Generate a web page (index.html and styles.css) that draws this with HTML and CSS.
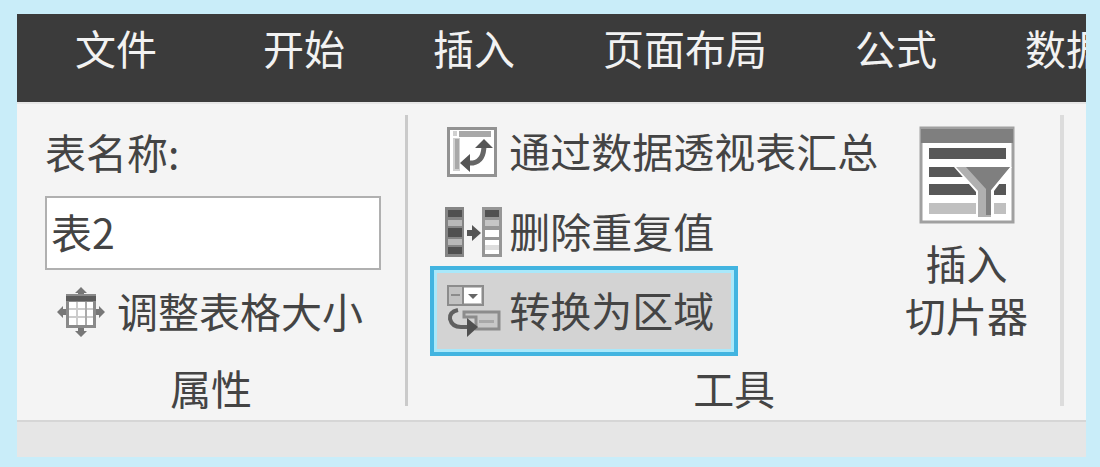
FILE: index.html
```html
<!DOCTYPE html>
<html lang="zh-CN">
<head>
<meta charset="utf-8">
<title>表格工具</title>
<link rel="stylesheet" href="styles.css">
</head>
<body>
<main class="window">
  <nav class="tabs">
    <button class="tab tab-file">文件</button>
    <button class="tab">开始</button>
    <button class="tab">插入</button>
    <button class="tab">页面布局</button>
    <button class="tab">公式</button>
    <button class="tab">数据</button>
  </nav>
  <div class="ribbon">
    <section class="group group-props">
      <div class="props">
        <label class="name-label" for="table-name">表名称:</label>
        <input class="name-input" id="table-name" type="text" value="表2">
        <button class="command resize">
          <svg class="icon" width="48" height="50" viewBox="0 0 48 50" aria-hidden="true">
            <path fill="#777" d="M24 0l6 6H18zM24 50l6-6H18zM0 25l6-6v12zM48 25l-6-6v12z"/>
            <path fill="#777" d="M21 4h6v4h-6zM21 41h6v4h-6zM4 22h5v6H4zM39 22h5v6h-5z"/>
            <path fill="#8a8a8a" d="M9 7h30v34H9z"/>
            <path fill="#5c5c5c" d="M9 9h30v5H9z"/>
            <path fill="#fff" d="M12 15h24v23H12z"/>
            <path fill="none" stroke="#ccc" stroke-width="2" d="M20 15v23M12 22h24M12 30h24"/>
            <path fill="none" stroke="#aaa" stroke-width="2" d="M29 15v23"/>
          </svg>
          <span class="caption">调整表格大小</span>
        </button>
      </div>
      <h2 class="group-title">属性</h2>
    </section>
    <div class="divider"></div>
    <section class="group group-tools">
      <div class="tools">
        <div class="tool-list">
          <button class="command tool">
            <span class="icon-box"><svg class="icon" width="52" height="50" viewBox="-2 0 52 50" aria-hidden="true">
              <path fill="#fff" stroke="#929292" stroke-width="3" d="M1.500 1.500h47v47h-47z"/>
              <path fill="#d0d0d0" d="M6 4h4v5H6zM6 11h7v33H6z"/>
              <path fill="#a8a8a8" d="M12 4h32v6H12zM8 12h4v30H8z"/>
              <path fill="none" stroke="#666" stroke-width="5" d="M20 36h6q11-2 11-18"/>
              <path fill="#555" d="M37 12l9 9H28zM13 36l10-9v18z"/>
            </svg></span>
            <span class="caption">通过数据透视表汇总</span>
          </button>
          <button class="command tool">
            <span class="icon-box"><svg class="icon" width="57" height="50" viewBox="0 0 57 50" aria-hidden="true">
              <path fill="#858585" d="M0 0h19v50H0z"/>
              <path fill="#505050" d="M3 3h14v7H3zM3 21h14v9H3zM3 40h14v7H3z"/>
              <path fill="#b8b8b8" d="M3 13h14v6H3zM3 32h14v6H3z"/>
              <path fill="#969696" d="M37 0h20v50H37z"/>
              <path fill="#505050" d="M40 3h14v7H40z"/>
              <path fill="#c6c6c6" d="M40 13h14v6H40z"/>
              <path fill="#fff" d="M40 23h14v7H40zM40 33h14v5H40zM40 43h14v4H40z"/>
              <path fill="#ddd" d="M40 38h14v5H40z"/>
              <path fill="#555" d="M22 23h5v-5l9 8-9 8v-5h-5z"/>
            </svg></span>
            <span class="caption">删除重复值</span>
          </button>
          <button class="command tool tool-active">
            <span class="icon-box"><svg class="icon" width="56" height="52" viewBox="0 0 56 52" aria-hidden="true">
              <path fill="#c2c2c2" stroke="#8c8c8c" stroke-width="2" d="M3 1h35v19H3z"/>
              <path fill="#fff" d="M19 3h17v15H19z"/>
              <path fill="#8c8c8c" d="M6 9h9v2H6zM17 2h2v17h-2z"/>
              <path fill="#666" d="M23 9h10l-5 5z"/>
              <path fill="#c8c8c8" stroke="#8c8c8c" stroke-width="3" d="M19 27h35v17H31V32H19z"/>
              <path fill="#a8a8a8" d="M34 35h15v3H34z"/>
              <path fill="none" stroke="#606060" stroke-width="4" d="M13 25q-9 2-8 9 2 8 11 8h10"/>
              <path fill="#505050" d="M22 33l11 9-11 10z"/>
            </svg></span>
            <span class="caption">转换为区域</span>
          </button>
        </div>
        <button class="slicer">
          <svg class="icon" width="96" height="98" viewBox="1 0 96 98" aria-hidden="true">
            <path fill="#fff" stroke="#a0a0a0" stroke-width="3" d="M3 2h92v94H3z"/>
            <path fill="#7f7f7f" d="M3 3h92v14H3z"/>
            <path fill="#585858" d="M11 22h77v11H11zM11 41h50v10H11zM11 58h77v11H11z"/>
            <path fill="#c0c0c0" d="M11 77h77v11H11z"/>
            <path fill="#fff" d="M36 41h58L76 65v26H58V66z"/>
            <path fill="#b0b0b0" d="M38 41h54L73 64v27H60V65z"/>
            <path fill="#7f7f7f" d="M48 41h44L73 64v25h-5V63z"/>
          </svg>
          <span>插入<br>切片器</span>
        </button>
      </div>
      <h2 class="group-title">工具</h2>
    </section>
    <div class="divider divider-end"></div>
  </div>
  <div class="formula-strip"></div>
</main>
</body>
</html>
```
FILE: styles.css
```css
* {
  box-sizing: border-box;
}

body {
  margin: 0;
  padding: 14px 14px 10px 17px;
  background: #c9edf9;
  color: #444;
  font-family: "Noto Sans CJK SC", "Noto Sans", sans-serif;
  font-size: 41px;
  line-height: 52px;
}

button,
input {
  margin: 0;
  padding: 0;
  border: 0;
  background: none;
  color: inherit;
  font: inherit;
}

.window {
  overflow: hidden;
  background: #f4f4f4;
}

.tabs {
  display: flex;
  overflow: hidden;
  padding: 0 14px;
  background: #3b3b3b;
  color: #f2f2f2;
}

.tab {
  flex: none;
  padding: 7px 44px 29px;
  white-space: nowrap;
}

.tab-file {
  margin-right: 18px;
}

.ribbon {
  display: flex;
  border-top: 2px solid #e6e6e6;
}

.group {
  display: flex;
  flex-direction: column;
  padding-top: 14px;
}

.group-props {
  flex: 389 1 0;
}

.group-tools {
  flex: 653 1 0;
}

.group-title {
  margin: 0;
  padding-bottom: 4px;
  font-size: 41px;
  font-weight: 400;
  line-height: 58px;
  text-align: center;
}

.props {
  display: flex;
  flex-direction: column;
  height: 240px;
  padding: 0 24px 0 28px;
}

.name-label {
  line-height: 66px;
}

.name-input {
  width: 100%;
  height: 74px;
  margin-top: 12px;
  padding: 0 4px 4px;
  border: 2px solid #b0b0b0;
  background: #fff;
}

.command {
  display: flex;
  align-items: center;
  white-space: nowrap;
}

.caption {
  padding-bottom: 4px;
}

.icon {
  display: block;
  flex: none;
}

.resize {
  gap: 12px;
  height: 84px;
  padding-left: 12px;
}

.tools {
  display: flex;
  justify-content: space-between;
  align-items: flex-start;
  height: 240px;
  padding: 0 32px 0 22px;
}

.tool-list {
  display: flex;
  flex-direction: column;
  align-items: flex-start;
}

.tool {
  height: 68px;
  margin-bottom: 12px;
  padding: 0 15px;
}

.tool + .tool {
  margin-bottom: 0;
}

.icon-box {
  width: 64px;
}

.tool-active {
  height: 90px;
  padding: 0 20px 0 11px;
  border: 4px solid #42b4e0;
  background: #d3d3d3;
  box-shadow: inset 0 0 0 3px #a9e8fa;
}

.slicer {
  display: flex;
  flex-direction: column;
  align-items: center;
  gap: 12px;
  padding-top: 8px;
  text-align: center;
}

.divider {
  width: 3px;
  margin: 11px 0 14px;
  background: #cacaca;
}

.divider-end {
  width: 4px;
  margin-right: 22px;
  background: #dcdcdc;
}

.formula-strip {
  height: 37px;
  border-top: 2px solid #d6d6d6;
  background: #e6e6e6;
}
```
